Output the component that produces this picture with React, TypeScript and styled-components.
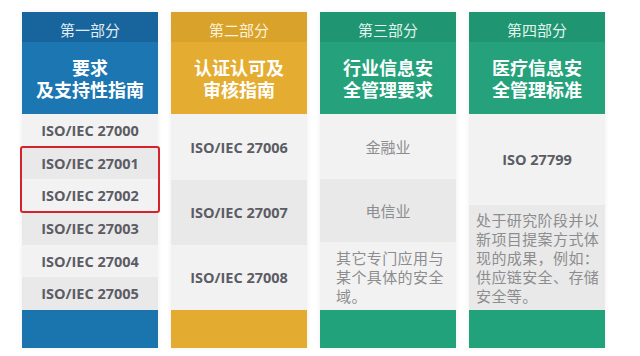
import React from "react";
import styled, { createGlobalStyle } from "styled-components";

const Global = createGlobalStyle`
  html, body { margin: 0; padding: 0; background: #ffffff; }
  body { width: 640px; height: 356px; overflow: hidden; }
`;

type Tone = { dark: string; main: string; foot: string; tag: string };

const tones: Record<string, Tone> = {
  blue: { dark: "#17659c", main: "#1b76b1", foot: "#1a75ae", tag: "#e2ecf5" },
  gold: { dark: "#d9a22b", main: "#e4ad31", foot: "#e3ab30", tag: "#fcf2dc" },
  green: { dark: "#1f9571", main: "#25a27c", foot: "#22a27a", tag: "#e3f5ee" },
};

const Board = styled.div`
  display: flex;
  gap: 13px;
  padding: 12px 0 0 22px;
  font-family: "Noto Sans CJK SC", "Noto Sans", sans-serif;
`;

const Column = styled.section`
  position: relative;
  width: 136px;
  display: flex;
  flex-direction: column;
  box-shadow: 0 0 5px rgba(0, 0, 0, 0.07);
`;

const HeaderTag = styled.div<{ $tone: Tone }>`
  height: 30px;
  box-sizing: border-box;
  padding-top: 6px;
  background: ${(p) => p.$tone.dark};
  color: ${(p) => p.$tone.tag};
  font-size: 15px;
  line-height: 24px;
  text-align: center;
`;

const HeaderTitle = styled.div<{ $tone: Tone }>`
  height: 72px;
  background: ${(p) => p.$tone.main};
  color: #ffffff;
  display: flex;
  align-items: center;
  justify-content: center;
  text-align: center;
  font-size: 18px;
  font-weight: 700;
  line-height: 22px;
`;

const Body = styled.div`
  height: 196px;
  display: flex;
  flex-direction: column;
`;

const Cell = styled.div<{ $grow: number; $alt?: boolean; $align?: "center" | "left" }>`
  flex: ${(p) => p.$grow} 1 0;
  min-height: 0;
  background: ${(p) => (p.$alt ? "#e9e9e9" : "#f2f2f2")};
  display: flex;
  align-items: center;
  justify-content: ${(p) => (p.$align === "left" ? "flex-start" : "center")};
`;

const Code = styled.span`
  font-family: "Open Sans", "Liberation Sans", sans-serif;
  font-weight: 700;
  font-size: 14.5px;
  color: #5c5c64;
  white-space: nowrap;
`;

const Sector = styled.span`
  font-size: 15px;
  color: #8d8d8f;
`;

const Note = styled.p<{ $pad: string }>`
  margin: 0;
  padding: ${(p) => p.$pad};
  font-size: 15px;
  line-height: 19px;
  letter-spacing: 0.4px;
  color: #8d8d8f;
  white-space: nowrap;
`;

const Footer = styled.div<{ $tone: Tone }>`
  height: 38px;
  background: ${(p) => p.$tone.foot};
`;

const Highlight = styled.div`
  position: absolute;
  left: -2px;
  right: -2px;
  top: 134px;
  height: 67px;
  border: 2px solid #d6232b;
  border-radius: 3px;
  box-sizing: border-box;
  pointer-events: none;
`;

const Header: React.FC<{ tone: Tone; tag: string; title: React.ReactNode }> = ({ tone, tag, title }) => (
  <>
    <HeaderTag $tone={tone}>{tag}</HeaderTag>
    <HeaderTitle $tone={tone}>{title}</HeaderTitle>
  </>
);

const part1 = ["27000", "27001", "27002", "27003", "27004", "27005"];

export default function App() {
  return (
    <>
      <Global />
      <Board>
        <Column>
          <Header tone={tones.blue} tag="第一部分" title={<>要求<br />及支持性指南</>} />
          <Body>
            {part1.map((n, i) => (
              <Cell key={n} $grow={1} $alt={i % 2 === 1}>
                <Code>ISO/IEC {n}</Code>
              </Cell>
            ))}
          </Body>
          <Footer $tone={tones.blue} />
          <Highlight />
        </Column>

        <Column>
          <Header tone={tones.gold} tag="第二部分" title={<>认证认可及<br />审核指南</>} />
          <Body>
            <Cell $grow={66}><Code>ISO/IEC 27006</Code></Cell>
            <Cell $grow={65} $alt><Code>ISO/IEC 27007</Code></Cell>
            <Cell $grow={65}><Code>ISO/IEC 27008</Code></Cell>
          </Body>
          <Footer $tone={tones.gold} />
        </Column>

        <Column>
          <Header tone={tones.green} tag="第三部分" title={<>行业信息安<br />全管理要求</>} />
          <Body>
            <Cell $grow={65}><Sector>金融业</Sector></Cell>
            <Cell $grow={63} $alt><Sector>电信业</Sector></Cell>
            <Cell $grow={68} $align="left">
              <Note $pad="0 0 0 16px">其它专门应用与<br />某个具体的安全<br />域。</Note>
            </Cell>
          </Body>
          <Footer $tone={tones.green} />
        </Column>

        <Column>
          <Header tone={tones.green} tag="第四部分" title={<>医疗信息安<br />全管理标准</>} />
          <Body>
            <Cell $grow={91}><Code>ISO 27799</Code></Cell>
            <Cell $grow={105} $alt $align="left">
              <Note $pad="0 0 0 7px">处于研究阶段并以<br />新项目提案方式体<br />现的成果，例如：<br />供应链安全、存储<br />安全等。</Note>
            </Cell>
          </Body>
          <Footer $tone={tones.green} />
        </Column>
      </Board>
    </>
  );
}
